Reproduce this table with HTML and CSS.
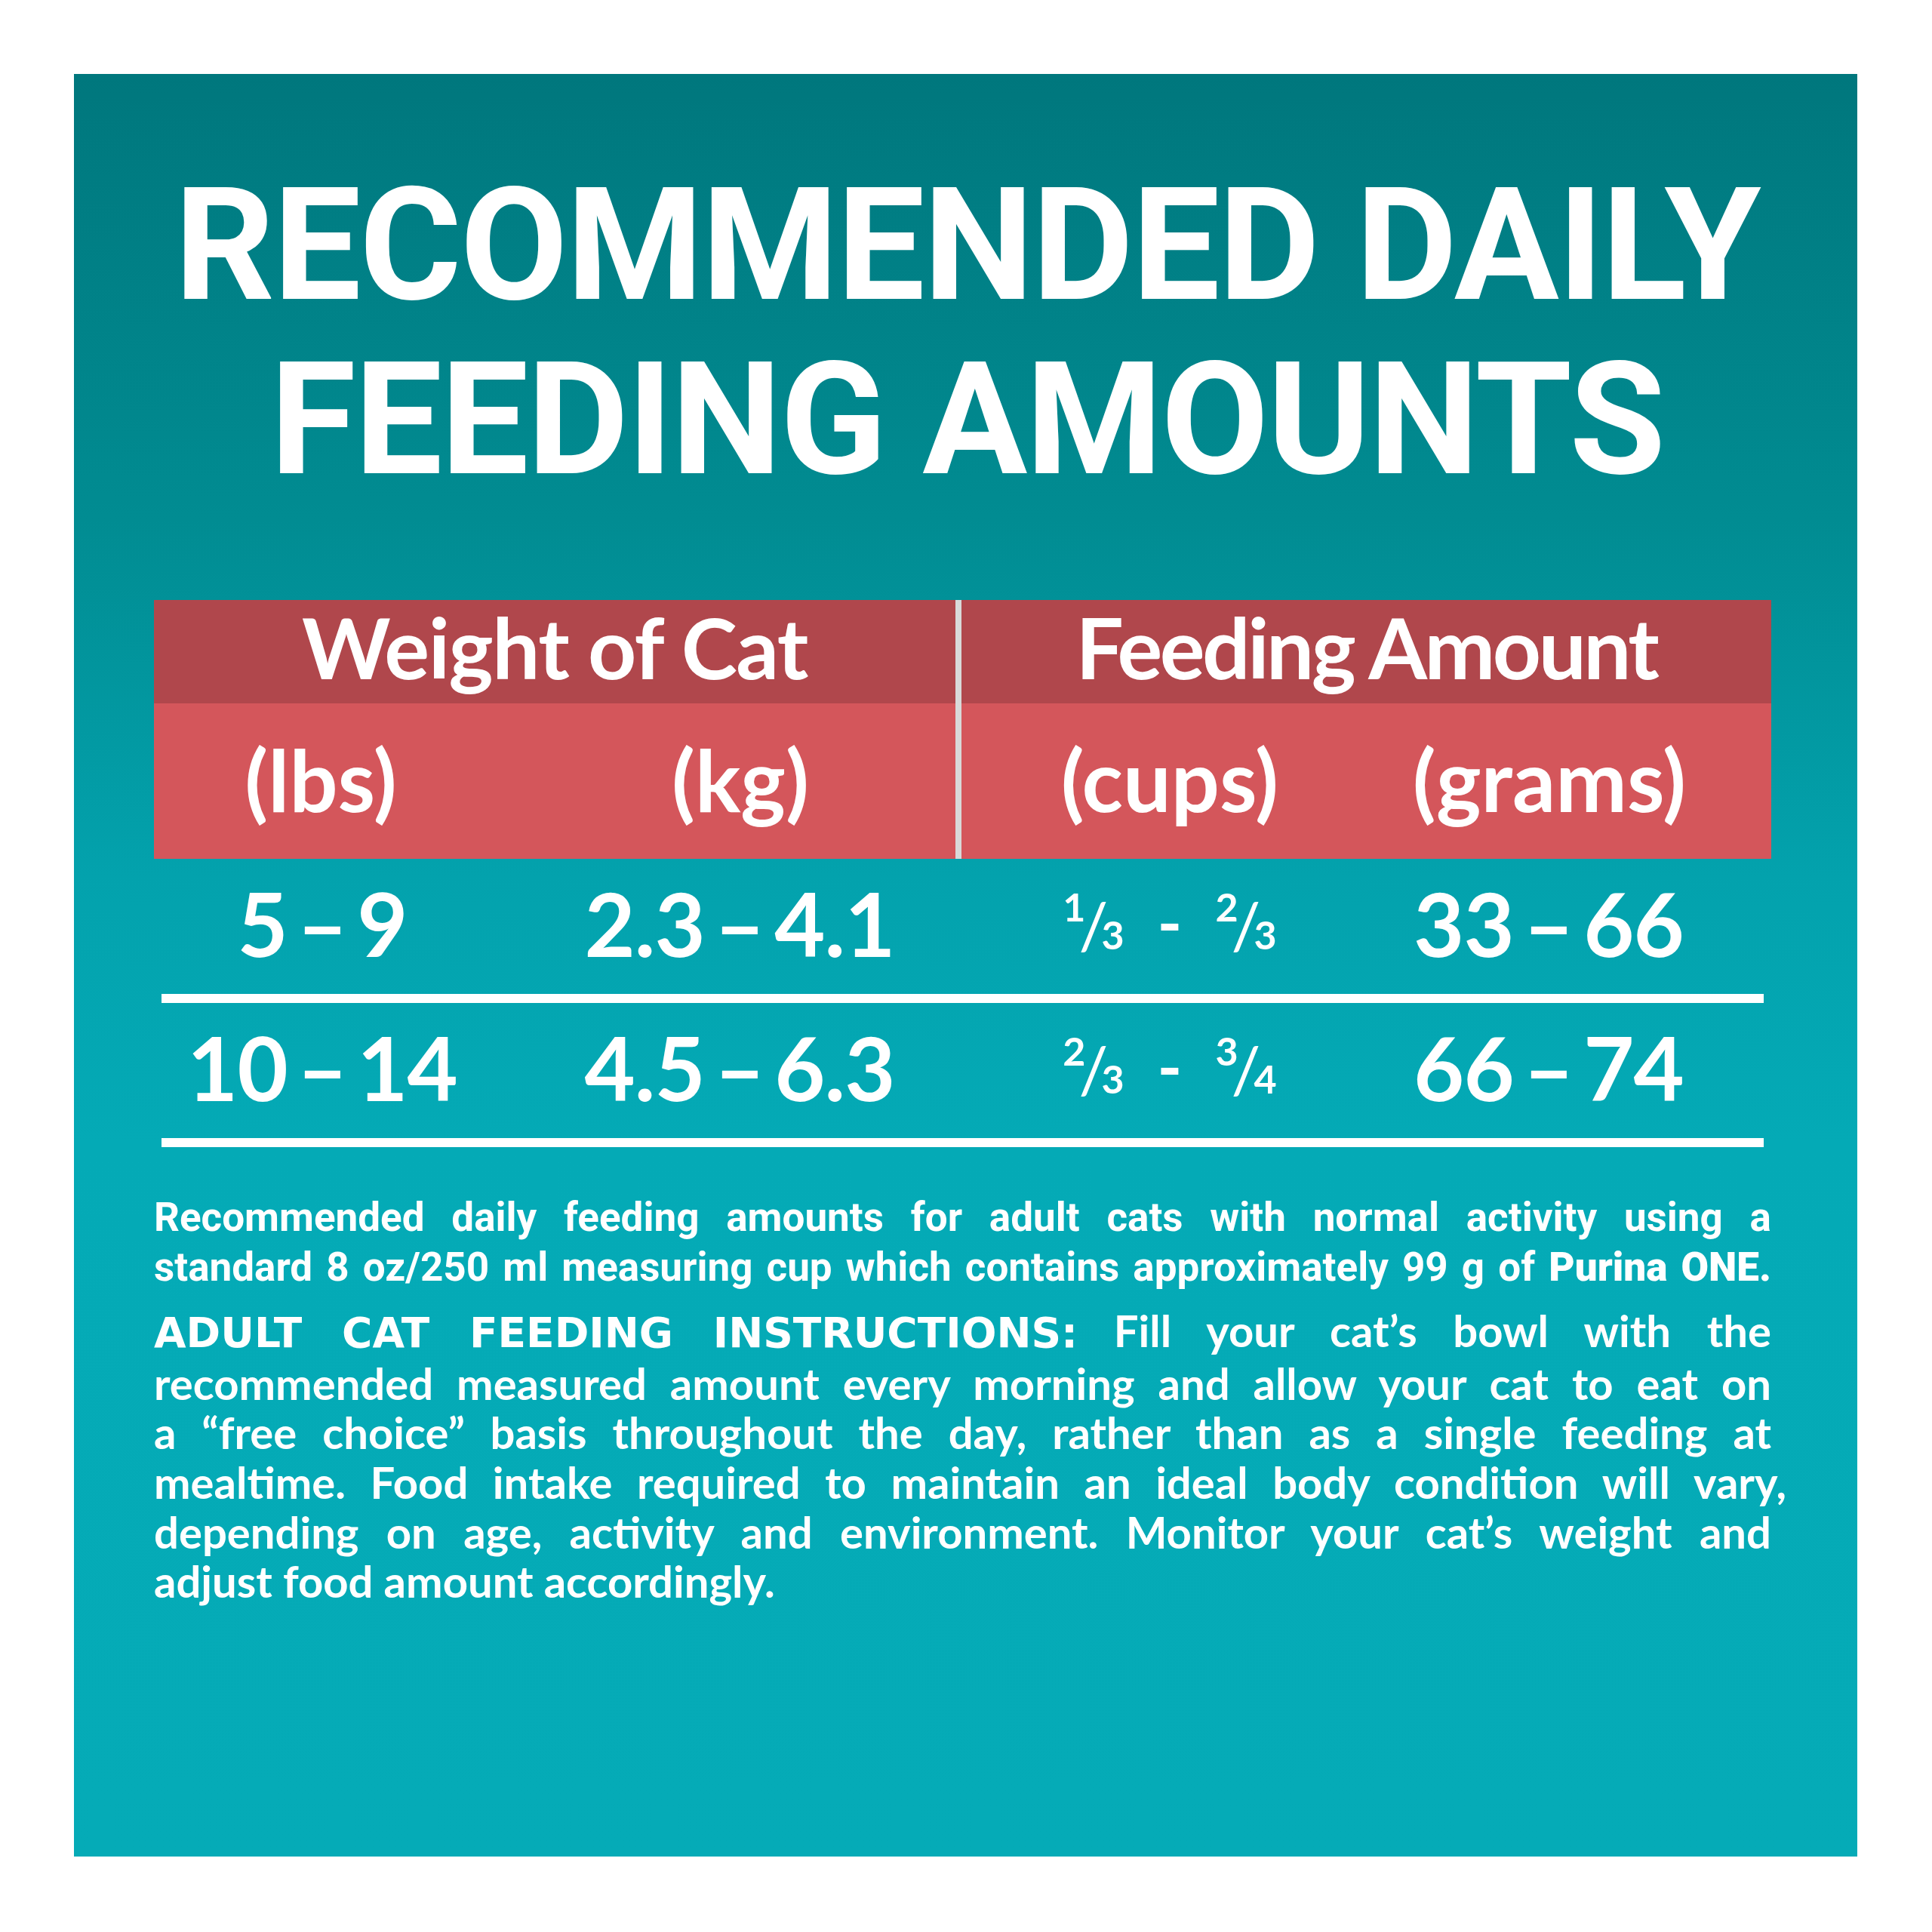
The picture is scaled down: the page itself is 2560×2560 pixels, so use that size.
FILE: index.html
```html
<!DOCTYPE html>
<html lang="en">
<head>
<meta charset="utf-8">
<title>Recommended Daily Feeding Amounts</title>
<link rel="stylesheet" href="styles.css">
</head>
<body>
<div class="panel">
  <h1 class="title">
    <span class="title-line">RECOMMENDED DAILY</span>
    <span class="title-line">FEEDING AMOUNTS</span>
  </h1>

  <div class="table">
    <div class="thead">
      <div class="th th-left">Weight of Cat</div>
      <div class="vdiv"></div>
      <div class="th th-right">Feeding Amount</div>
      <div class="sub sub-left">
        <span class="unit unit-lbs">(lbs)</span>
        <span class="unit unit-kg">(kg)</span>
      </div>
      <div class="sub sub-right">
        <span class="unit unit-cups">(cups)</span>
        <span class="unit unit-grams">(grams)</span>
      </div>
    </div>

    <div class="row">
      <span class="cell">5 – 9</span>
      <span class="cell">2.3 – 4.1</span>
      <span class="cell cups"><span class="frac"><span class="fn">1</span><span class="fs">/</span><span class="fd">3</span></span><span class="dash">-</span><span class="frac"><span class="fn">2</span><span class="fs">/</span><span class="fd">3</span></span></span>
      <span class="cell">33 – 66</span>
    </div>
    <div class="row">
      <span class="cell">10 – 14</span>
      <span class="cell">4.5 – 6.3</span>
      <span class="cell cups"><span class="frac"><span class="fn">2</span><span class="fs">/</span><span class="fd">3</span></span><span class="dash">-</span><span class="frac"><span class="fn">3</span><span class="fs">/</span><span class="fd">4</span></span></span>
      <span class="cell">66 – 74</span>
    </div>
  </div>

  <div class="notes">
    <p class="note note-amounts">
      <span class="line">Recommended daily feeding amounts for adult cats with normal activity using a</span>
      <span class="line">standard 8 oz/250 ml measuring cup which contains approximately 99 g of <b class="brand">Purina ONE.</b></span>
    </p>
    <p class="note note-instructions">
      <span class="line"><b class="lead">ADULT CAT FEEDING INSTRUCTIONS:</b> Fill your cat’s bowl with the</span>
      <span class="line">recommended measured amount every morning and allow your cat to eat on</span>
      <span class="line">a “free choice” basis throughout the day, rather than as a single feeding at</span>
      <span class="line line-over">mealtime. Food intake required to maintain an ideal body condition will vary,</span>
      <span class="line">depending on age, activity and environment. Monitor your cat’s weight and</span>
      <span class="line line-last">adjust food amount accordingly.</span>
    </p>
  </div>
</div>
</body>
</html>
```

FILE: styles.css
```css
html, body {
  margin: 0;
  padding: 0;
  background: #ffffff;
}

.panel {
  margin: 98px 0 0 98px;
  width: 2363px;
  height: 2362px;
  box-sizing: border-box;
  padding: 0 114px 0 106px;
  background: linear-gradient(180deg, #00777d 0%, #018c92 25%, #03a2ad 45%, #04aab6 60%, #05abb7 100%);
  color: #ffffff;
  display: flex;
  flex-direction: column;
}

/* ---------- Title ---------- */
.title {
  margin: 0;
  padding: 112px 0 0 12px;
  font-family: Roboto, "Liberation Sans", sans-serif;
  font-weight: 700;
  font-size: 207px;
  line-height: 231px;
  letter-spacing: -2px;
  text-align: center;
  display: flex;
  flex-direction: column;
  align-items: center;
}

.title-line {
  display: block;
  white-space: nowrap;
}

/* ---------- Table ---------- */
.table {
  margin-top: 123px;
  font-family: Lato, "Open Sans", sans-serif;
  font-weight: 700;
}

.thead {
  display: grid;
  grid-template-columns: 1062px 8px 1073px;
  grid-template-rows: 137px 206px;
}

.th {
  background: #b0474c;
  font-size: 112px;
  line-height: 1;
  display: flex;
  align-items: center;
  justify-content: center;
  padding-bottom: 14px;
  box-sizing: border-box;
  white-space: nowrap;
}

.th-left { grid-column: 1; grid-row: 1; letter-spacing: -1.5px; }
.th-right { grid-column: 3; grid-row: 1; letter-spacing: -3.5px; }

.vdiv {
  grid-column: 2;
  grid-row: 1 / 3;
  background: #d9d9d9;
}

.sub {
  grid-row: 2;
  background: #d4565b;
  display: flex;
  align-items: center;
  font-size: 113px;
  line-height: 1;
  padding-bottom: 5px;
  box-sizing: border-box;
}

.sub-left { grid-column: 1; }
.sub-right { grid-column: 3; }

.unit {
  display: block;
  text-align: center;
  box-sizing: border-box;
  white-space: nowrap;
}

.unit-lbs { width: 442px; }
.unit-kg { width: 620px; padding-left: 50px; }
.unit-cups { width: 552px; }
.unit-grams { width: 521px; padding-right: 67px; }

.row {
  margin: 0 10px;
  height: 191px;
  box-sizing: border-box;
  border-bottom: 12px solid #ffffff;
  padding-bottom: 8px;
  display: grid;
  grid-template-columns: 426px 680px 460px 544px;
  align-items: center;
  font-size: 116px;
  line-height: 1;
  word-spacing: -14px;
  letter-spacing: -1px;
}

.cell {
  text-align: center;
  white-space: nowrap;
}

.cups {
  display: flex;
  justify-content: center;
  align-items: baseline;
  gap: 44px;
  word-spacing: 0;
  letter-spacing: 0;
}

.frac {
  display: inline-flex;
  align-items: baseline;
}

.fn, .fd {
  font-size: 52px;
}

.fn {
  position: relative;
  top: -37px;
}

.fs {
  font-size: 86px;
  font-weight: 400;
  margin: 0 -9px;
}

.dash {
  font-size: 88px;
  font-weight: 700;
  position: relative;
  top: -3px;
}

/* ---------- Notes ---------- */
.notes {
  margin-top: 61px;
}

.note {
  margin: 0;
  line-height: 65.6px;
}

.line {
  display: block;
  text-align: justify;
  text-align-last: justify;
}

.note-amounts {
  font-family: Roboto, "Liberation Sans", sans-serif;
  font-weight: 700;
  font-size: 53px;
}

.brand {
  font-weight: 900;
}

.note-instructions {
  margin-top: 18px;
  font-family: Lato, "Open Sans", sans-serif;
  font-weight: 700;
  font-size: 58px;
}

.lead {
  font-family: "DejaVu Sans", Lato, sans-serif;
  font-weight: 700;
  font-size: 55px;
}

.line-over {
  margin-right: -20px;
}

.line-last {
  text-align: left;
  text-align-last: left;
}
```
